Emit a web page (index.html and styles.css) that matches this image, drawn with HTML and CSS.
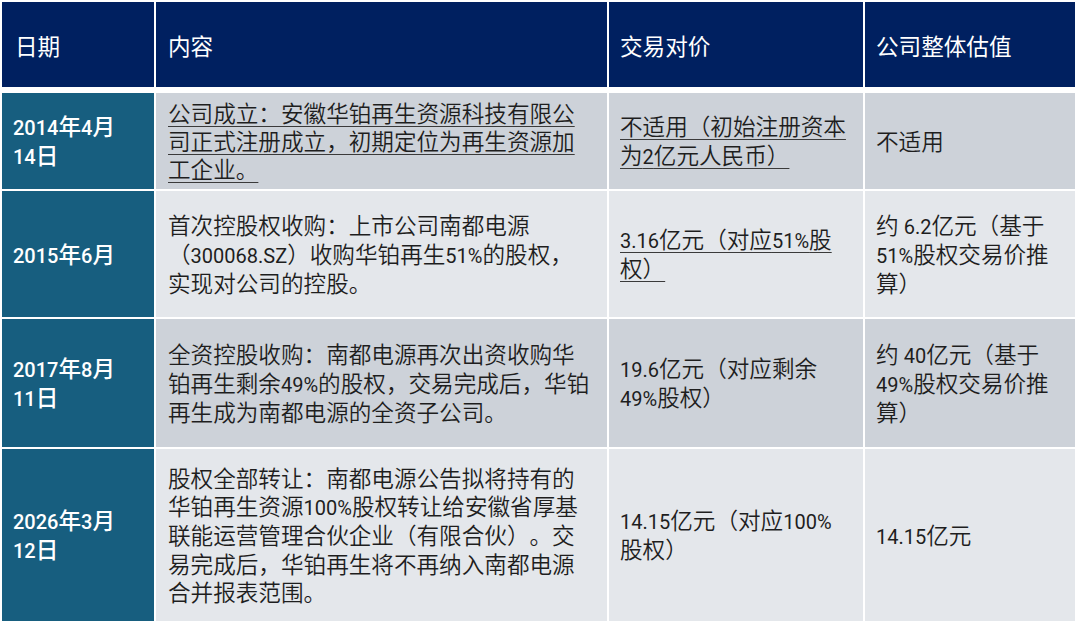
FILE: index.html
```html
<!DOCTYPE html>
<html lang="zh-CN">
<head>
<meta charset="utf-8">
<title>华铂再生交易历程</title>
<link rel="stylesheet" href="styles.css">
</head>
<body>
<div class="table">
  <div class="head">
    <div class="th">日期</div>
    <div class="th">内容</div>
    <div class="th">交易对价</div>
    <div class="th">公司整体估值</div>
  </div>
  <div class="body">
    <div class="date"><span class="n">2014</span>年<span class="n">4</span>月<span class="n">14</span>日</div>
    <div class="cell dark"><span class="ul">公司成立：安徽华铂再生资源科技有限公司正式注册成立，初期定位为再生资源加工企业。</span></div>
    <div class="cell dark narrow"><span class="ul">不适用（初始注册资本为<span class="n">2</span>亿元人民币）</span></div>
    <div class="cell dark">不适用</div>

    <div class="date"><span class="n">2015</span>年<span class="n">6</span>月</div>
    <div class="cell light">首次控股权收购：上市公司南都电源（<span class="n">300068.SZ</span>）收购华铂再生<span class="n">51%</span>的股权，实现对公司的控股。</div>
    <div class="cell light narrow"><span class="ul"><span class="n">3.16</span>亿元（对应<span class="n">51%</span>股权）</span></div>
    <div class="cell light">约 <span class="n">6.2</span>亿元（基于<span class="n">51%</span>股权交易价推算）</div>

    <div class="date"><span class="n">2017</span>年<span class="n">8</span>月<span class="n">11</span>日</div>
    <div class="cell dark">全资控股收购：南都电源再次出资收购华铂再生剩余<span class="n">49%</span>的股权，交易完成后，华铂再生成为南都电源的全资子公司。</div>
    <div class="cell dark narrow"><span class="n">19.6</span>亿元（对应剩余<span class="n">49%</span>股权）</div>
    <div class="cell dark">约 <span class="n">40</span>亿元（基于<span class="n">49%</span>股权交易价推算）</div>

    <div class="date"><span class="n">2026</span>年<span class="n">3</span>月<span class="n">12</span>日</div>
    <div class="cell light">股权全部转让：南都电源公告拟将持有的华铂再生资源<span class="n">100%</span>股权转让给安徽省厚基联能运营管理合伙企业（有限合伙）。交易完成后，华铂再生将不再纳入南都电源合并报表范围。</div>
    <div class="cell light narrow"><span class="n">14.15</span>亿元（对应<span class="n">100%</span>股权）</div>
    <div class="cell light"><span class="n">14.15</span>亿元</div>
  </div>
</div>
</body>
</html>
```
FILE: styles.css
```css
html, body {
  margin: 0;
  padding: 0;
  background: #ffffff;
}
body {
  font-family: "Noto Sans CJK SC", "Noto Sans", sans-serif;
  font-weight: 350;
  font-size: 22.6px;
  line-height: 1.25;
  color: #1e1e1e;
  text-spacing-trim: space-all;
}
.n {
  font-family: "Roboto", "Noto Sans CJK SC", sans-serif;
  font-weight: 400;
  font-size: 20px;
}
.table {
  padding: 2px 0 0 2px;
  width: 1073px;
}
.head,
.body {
  display: grid;
  grid-template-columns: 152px 451px 254px 210px;
  column-gap: 2px;
}
.head {
  grid-template-rows: 85px;
}
.body {
  margin-top: 6px;
  grid-template-rows: 96px 126px 128px 172px;
  row-gap: 2px;
}
.th {
  background: #002060;
  color: #ffffff;
  font-weight: 400;
  display: flex;
  align-items: center;
  padding: 4px 12px 0 13px;
}
.th:nth-child(2) { padding-left: 12px; }
.th:nth-child(3),
.th:nth-child(4) { padding-left: 11px; }
.date {
  background: #175e7f;
  color: #ffffff;
  font-weight: 500;
  display: block;
  align-content: center;
  padding: 0 28px 0 11px;
}
.date .n {
  font-weight: 500;
}
.cell {
  display: block;
  align-content: center;
  padding: 0 14px 0 12px;
}
.cell.narrow {
  padding: 0 13px 0 11px;
}
.cell:nth-child(4n) {
  padding: 0 12px 0 11px;
}
.dark { background: #cdd2d9; }
.light { background: #e4e7eb; }
.ul {
  text-decoration: underline;
  text-decoration-color: #3a3a3a;
  text-decoration-thickness: 1px;
  text-underline-offset: 4px;
}
```
